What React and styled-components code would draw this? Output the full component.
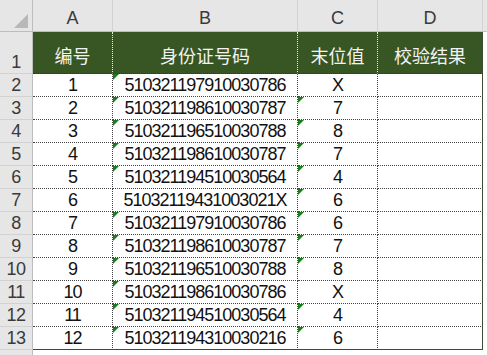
import React from 'react';
import styled, { createGlobalStyle, css } from 'styled-components';

const GlobalStyle = createGlobalStyle`
  html, body {
    margin: 0;
    padding: 0;
    background: #ffffff;
    overflow: hidden;
  }
  * {
    box-sizing: border-box;
  }
`;

const rows = [
  ['1', '510321197910030786', 'X'],
  ['2', '510321198610030787', '7'],
  ['3', '510321196510030788', '8'],
  ['4', '510321198610030787', '7'],
  ['5', '510321194510030564', '4'],
  ['6', '51032119431003021X', '6'],
  ['7', '510321197910030786', '6'],
  ['8', '510321198610030787', '7'],
  ['9', '510321196510030788', '8'],
  ['10', '510321198610030786', 'X'],
  ['11', '510321194510030564', '4'],
  ['12', '510321194310030216', '6'],
];

const columns = ['A', 'B', 'C', 'D'];
const titles = ['编号', '身份证号码', '末位值', '校验结果'];

// numbers stored as text get Excel's green flag
const isText = (v) => /X$/.test(v);

function App() {
  return (
    <>
      <GlobalStyle />
      <Sheet>
        <Corner>
          <svg width="14" height="14" viewBox="0 0 14 14">
            <polygon points="14,0 14,14 0,14" fill="#b8b8b8" />
          </svg>
        </Corner>
        {columns.map((c) => (
          <ColHead key={c}>{c}</ColHead>
        ))}
        <ColHead $stub />

        <RowHead>1</RowHead>
        {titles.map((t, i) => (
          <HeadCell key={t} $last={i === titles.length - 1}>
            {t}
          </HeadCell>
        ))}
        <Blank />

        {rows.map((r, i) => {
          const last = i === rows.length - 1;
          return (
            <React.Fragment key={i}>
              <RowHead>{i + 2}</RowHead>
              <Cell $bottom={last}>{r[0]}</Cell>
              <Cell $bottom={last} $flag={!isText(r[1])}>
                {r[1]}
              </Cell>
              <Cell $bottom={last} $flag={!isText(r[2])}>
                {r[2]}
              </Cell>
              <Cell $bottom={last} $last />
              <Blank />
            </React.Fragment>
          );
        })}
        <RowHead $stub />
      </Sheet>
    </>
  );
}

export default App;

const Sheet = styled.div`
  width: 487px;
  height: 355px;
  display: grid;
  grid-template-columns: 33px 80px 185px 80px 105px 1fr;
  grid-template-rows: 32px 42px repeat(12, 23px) 1fr;
  font-family: 'Liberation Sans', Arial, sans-serif;
  overflow: hidden;
`;

const Corner = styled.div`
  background: #e6e6e6;
  border-right: 1px solid #bdbdbd;
  border-bottom: 1px solid #bdbdbd;
  display: flex;
  align-items: flex-end;
  justify-content: flex-end;
  padding: 0 4px 3px 0;
`;

const ColHead = styled.div`
  background: #e6e6e6;
  border-right: 1px solid ${(p) => (p.$stub ? 'transparent' : '#d2d2d2')};
  border-bottom: 1px solid #bdbdbd;
  color: #3a3a3a;
  font-size: 18px;
  display: flex;
  align-items: flex-end;
  justify-content: center;
  padding-bottom: 2px;
`;

const RowHead = styled.div`
  background: #e6e6e6;
  border-right: 1px solid #bdbdbd;
  border-bottom: 1px solid #d2d2d2;
  color: #3a3a3a;
  font-size: 18px;
  letter-spacing: -0.5px;
  display: flex;
  align-items: flex-end;
  justify-content: center;
  padding-bottom: 0;
  line-height: 21px;
  ${(p) =>
    p.$stub &&
    css`
      border-bottom: none;
    `}
`;

const HeadCell = styled.div`
  background: #375623;
  color: #f2f2f2;
  font-family: 'Noto Sans CJK SC', 'Liberation Sans', sans-serif;
  font-size: 18px;
  display: flex;
  align-items: center;
  justify-content: center;
  padding-top: 4px;
  border-right: 1px dotted #e8ece4;
  border-bottom: 1px dotted #333333;
  ${(p) =>
    p.$last &&
    css`
      border-right: 1px solid #3c4d33;
    `}
`;

const Cell = styled.div`
  position: relative;
  color: #111111;
  font-size: 18px;
  letter-spacing: -1px;
  display: flex;
  align-items: flex-end;
  justify-content: center;
  line-height: 21px;
  padding-bottom: 0;
  border-right: 1px dotted #444444;
  border-bottom: 1px ${(p) => (p.$bottom ? 'solid #3c4d33' : 'dotted #444444')};
  ${(p) =>
    p.$last &&
    css`
      border-right: 1px solid #3c4d33;
    `}
  ${(p) =>
    p.$flag &&
    css`
      &::before {
        content: '';
        position: absolute;
        left: 0;
        top: 0;
        border-top: 6px solid #178017;
        border-right: 6px solid transparent;
      }
    `}
`;

const Blank = styled.div`
  background: #ffffff;
`;
